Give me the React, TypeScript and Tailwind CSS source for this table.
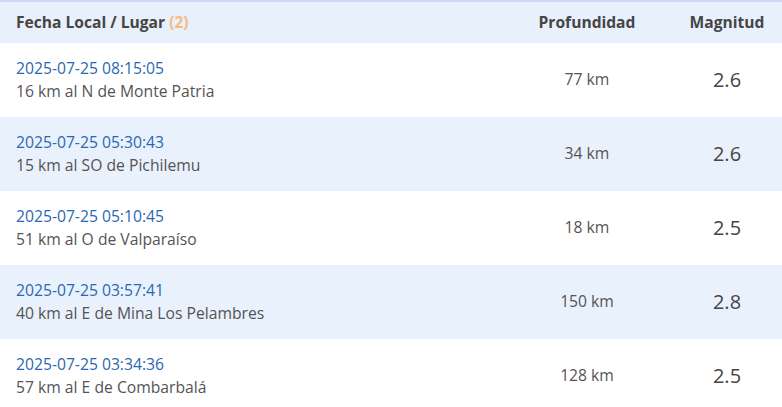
const rows = [
  { date: "2025-07-25 08:15:05", place: "16 km al N de Monte Patria", depth: "77 km", mag: "2.6" },
  { date: "2025-07-25 05:30:43", place: "15 km al SO de Pichilemu", depth: "34 km", mag: "2.6" },
  { date: "2025-07-25 05:10:45", place: "51 km al O de Valparaíso", depth: "18 km", mag: "2.5" },
  { date: "2025-07-25 03:57:41", place: "40 km al E de Mina Los Pelambres", depth: "150 km", mag: "2.8" },
  { date: "2025-07-25 03:34:36", place: "57 km al E de Combarbalá", depth: "128 km", mag: "2.5" },
];

export default function App() {
  return (
    <div className="w-[782px] h-[407px] overflow-hidden bg-white font-['Open_Sans',sans-serif]">
      <div className="flex h-[43px] items-center border-t-2 border-[#c9daf2] bg-[#e8f0fb] text-[15.6px] font-bold text-[#454545]">
        <div className="flex-1 pl-4">
          Fecha Local / Lugar <span className="text-[#f7b982]">(2)</span>
        </div>
        <div className="w-[170px] text-center">Profundidad</div>
        <div className="w-[110px] text-center">Magnitud</div>
      </div>
      {rows.map((r, i) => (
        <div
          key={r.date}
          className={`flex h-[74px] items-center ${i % 2 === 1 ? "bg-[#e9f1fc]" : "bg-white"}`}
        >
          <div className="flex-1 pl-4 text-[15.7px] leading-[23px]">
            <div className="text-[#2b68b3]">{r.date}</div>
            <div className="text-[#545454]">{r.place}</div>
          </div>
          <div className="w-[170px] text-center text-[15.7px] text-[#545454]">{r.depth}</div>
          <div className="w-[110px] text-center text-[20px] text-[#454545]">{r.mag}</div>
        </div>
      ))}
    </div>
  );
}
